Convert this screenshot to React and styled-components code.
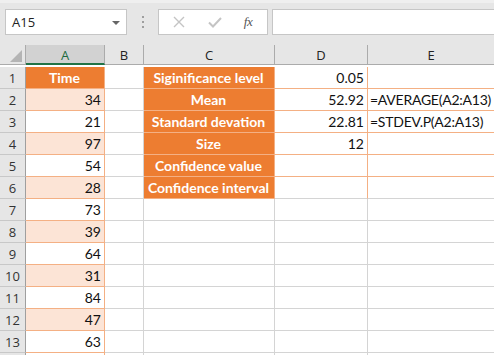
import React from 'react';
import styled, { createGlobalStyle } from 'styled-components';

const Global = createGlobalStyle`
  html, body { margin: 0; padding: 0; overflow: hidden; background: #ffffff; }
  body { width: 494px; height: 355px; }
`;

const ORANGE = '#ed7d31';
const PEACH = '#fce4d6';
const PEACH_LINE = '#f4b084';
const GRID = '#d4d4d4';
const HEAD_BG = '#e6e6e6';

const Page = styled.div`
  width: 494px;
  height: 355px;
  overflow: hidden;
  background: #fff;
  font-family: Lato, "Liberation Sans", sans-serif;
`;

const Toolbar = styled.div`
  height: 45px;
  box-sizing: border-box;
  background: ${HEAD_BG};
  border-top: 3px solid #efefef;
  display: flex;
  align-items: flex-start;
  padding: 6px 0 0 5px;
`;

const NameBox = styled.div`
  width: 122px;
  height: 26px;
  box-sizing: border-box;
  background: #fff;
  border: 1px solid #c6c6c6;
  display: flex;
  align-items: center;
  justify-content: space-between;
  padding: 0 6px 0 6px;
  font-family: "Open Sans", "Noto Sans", sans-serif;
  font-size: 13px;
  color: #222;
`;

const Caret = styled.span`
  width: 0;
  height: 0;
  border-left: 4px solid transparent;
  border-right: 4px solid transparent;
  border-top: 4px solid #666;
  margin-top: 1px;
`;

const Grip = styled.div`
  width: 31px;
  height: 26px;
  display: flex;
  flex-direction: column;
  align-items: center;
  justify-content: center;
  gap: 3px;
  span {
    width: 2px;
    height: 2px;
    background: #9e9e9e;
  }
`;

const FxButtons = styled.div`
  width: 110px;
  height: 26px;
  box-sizing: border-box;
  background: #fff;
  border: 1px solid #c6c6c6;
  display: grid;
  grid-template-columns: 36px 36px 1fr;
  align-items: center;
  justify-items: center;
  padding-left: 2px;
`;

const FxLabel = styled.span`
  font-family: "Liberation Serif", serif;
  font-style: italic;
  font-size: 13px;
  color: #555;
  letter-spacing: -0.5px;
  margin-right: 4px;
`;

const FormulaInput = styled.div`
  flex: 1;
  height: 26px;
  box-sizing: border-box;
  margin-left: 4px;
  background: #fff;
  border: 1px solid #c6c6c6;
  border-right: none;
`;

const Sheet = styled.div`
  display: grid;
  grid-template-columns: 26px 79px 39px 131px 93px 1fr;
  grid-auto-rows: 22px;
`;

const ColHead = styled.div`
  height: 20px;
  box-sizing: border-box;
  background: ${p => (p.$sel ? '#d2d2d2' : HEAD_BG)};
  border-right: 1px solid #ababab;
  border-bottom: ${p => (p.$sel ? '2px solid #217346' : '1px solid #ababab')};
  display: flex;
  align-items: center;
  justify-content: center;
  font-family: "Open Sans", "Noto Sans", sans-serif;
  font-size: 13px;
  color: ${p => (p.$sel ? '#1e6b40' : '#222')};
  padding-top: ${p => (p.$sel ? '1px' : '0')};
`;

const Corner = styled.div`
  height: 20px;
  box-sizing: border-box;
  background: ${HEAD_BG};
  border-right: 1px solid #ababab;
  border-bottom: 1px solid #ababab;
  position: relative;
  &::after {
    content: '';
    position: absolute;
    right: 3px;
    bottom: 2px;
    width: 0;
    height: 0;
    border-left: 12px solid transparent;
    border-bottom: 12px solid #b4b4b4;
  }
`;

const RowHead = styled.div`
  box-sizing: border-box;
  background: ${HEAD_BG};
  border-right: 1px solid #9f9f9f;
  border-bottom: 1px solid #c8c8c8;
  display: flex;
  align-items: center;
  justify-content: center;
  font-family: "Open Sans", "Noto Sans", sans-serif;
  font-size: 13px;
  color: #333;
  padding-top: 1px;
`;

const Cell = styled.div`
  box-sizing: border-box;
  background: ${p => p.$bg || '#fff'};
  border-right: 1px solid ${p => p.$line || GRID};
  border-bottom: 1px solid ${p => p.$under || p.$line || GRID};
  display: flex;
  align-items: center;
  justify-content: ${p => (p.$align === 'right' ? 'flex-end' : p.$align === 'center' ? 'center' : 'flex-start')};
  padding: 0 3px 0 2px;
  font-size: 14px;
  font-weight: ${p => (p.$bold ? 700 : 400)};
  color: ${p => p.$color || '#111'};
  white-space: nowrap;
  letter-spacing: ${p => (p.$tight ? '-0.25px' : 'normal')};
`;

const times = [34, 21, 97, 54, 28, 73, 39, 64, 31, 84, 47, 63];

const stats = [
  { label: 'Siginificance level', value: '0.05', formula: '' },
  { label: 'Mean', value: '52.92', formula: '=AVERAGE(A2:A13)' },
  { label: 'Standard devation', value: '22.81', formula: '=STDEV.P(A2:A13)' },
  { label: 'Size', value: '12', formula: '' },
  { label: 'Confidence value', value: '', formula: '' },
  { label: 'Confidence interval', value: '', formula: '' },
];

function Cross() {
  return (
    <svg width="12" height="12" viewBox="0 0 12 12">
      <path d="M1 1 L11 11 M11 1 L1 11" stroke="#c4c4c4" strokeWidth="1.4" fill="none" />
    </svg>
  );
}

function Tick() {
  return (
    <svg width="14" height="11" viewBox="0 0 14 11">
      <path d="M1 5.5 L5 9.5 L13 1" stroke="#c4c4c4" strokeWidth="2" fill="none" />
    </svg>
  );
}

function App() {
  const rows = [];
  for (let r = 1; r <= 14; r++) {
    const inData = r <= 13;
    const band = r % 2 === 0 && r <= 13;
    const stat = stats[r - 1];
    let aCell;
    if (r === 1) {
      aCell = <Cell $bg={ORANGE} $line={PEACH_LINE} $align="center" $bold $color="#fff">Time</Cell>;
    } else if (inData) {
      aCell = <Cell $bg={band ? PEACH : '#fff'} $line={PEACH_LINE} $align="right">{times[r - 2]}</Cell>;
    } else {
      aCell = <Cell $line={PEACH_LINE} $under={GRID} />;
    }
    rows.push(
      <React.Fragment key={r}>
        <RowHead>{inData ? r : ''}</RowHead>
        {aCell}
        <Cell />
        {stat ? (
          <Cell $bg={ORANGE} $line={PEACH_LINE} $align="center" $bold $color="#fff">{stat.label}</Cell>
        ) : (
          <Cell />
        )}
        {stat ? (
          <Cell $line={PEACH_LINE} $under={r === 6 ? GRID : PEACH_LINE} $align="right">{stat.value}</Cell>
        ) : (
          <Cell />
        )}
        {stat ? (
          <Cell $under={r === 6 ? GRID : PEACH_LINE} $tight>{stat.formula}</Cell>
        ) : (
          <Cell />
        )}
      </React.Fragment>
    );
  }

  return (
    <Page>
      <Global />
      <Toolbar>
        <NameBox>
          <span>A15</span>
          <Caret />
        </NameBox>
        <Grip>
          <span />
          <span />
          <span />
        </Grip>
        <FxButtons>
          <Cross />
          <Tick />
          <FxLabel>fx</FxLabel>
        </FxButtons>
        <FormulaInput />
      </Toolbar>
      <Sheet>
        <Corner />
        <ColHead $sel>A</ColHead>
        <ColHead>B</ColHead>
        <ColHead>C</ColHead>
        <ColHead>D</ColHead>
        <ColHead>E</ColHead>
        {rows}
      </Sheet>
    </Page>
  );
}

export default App;
